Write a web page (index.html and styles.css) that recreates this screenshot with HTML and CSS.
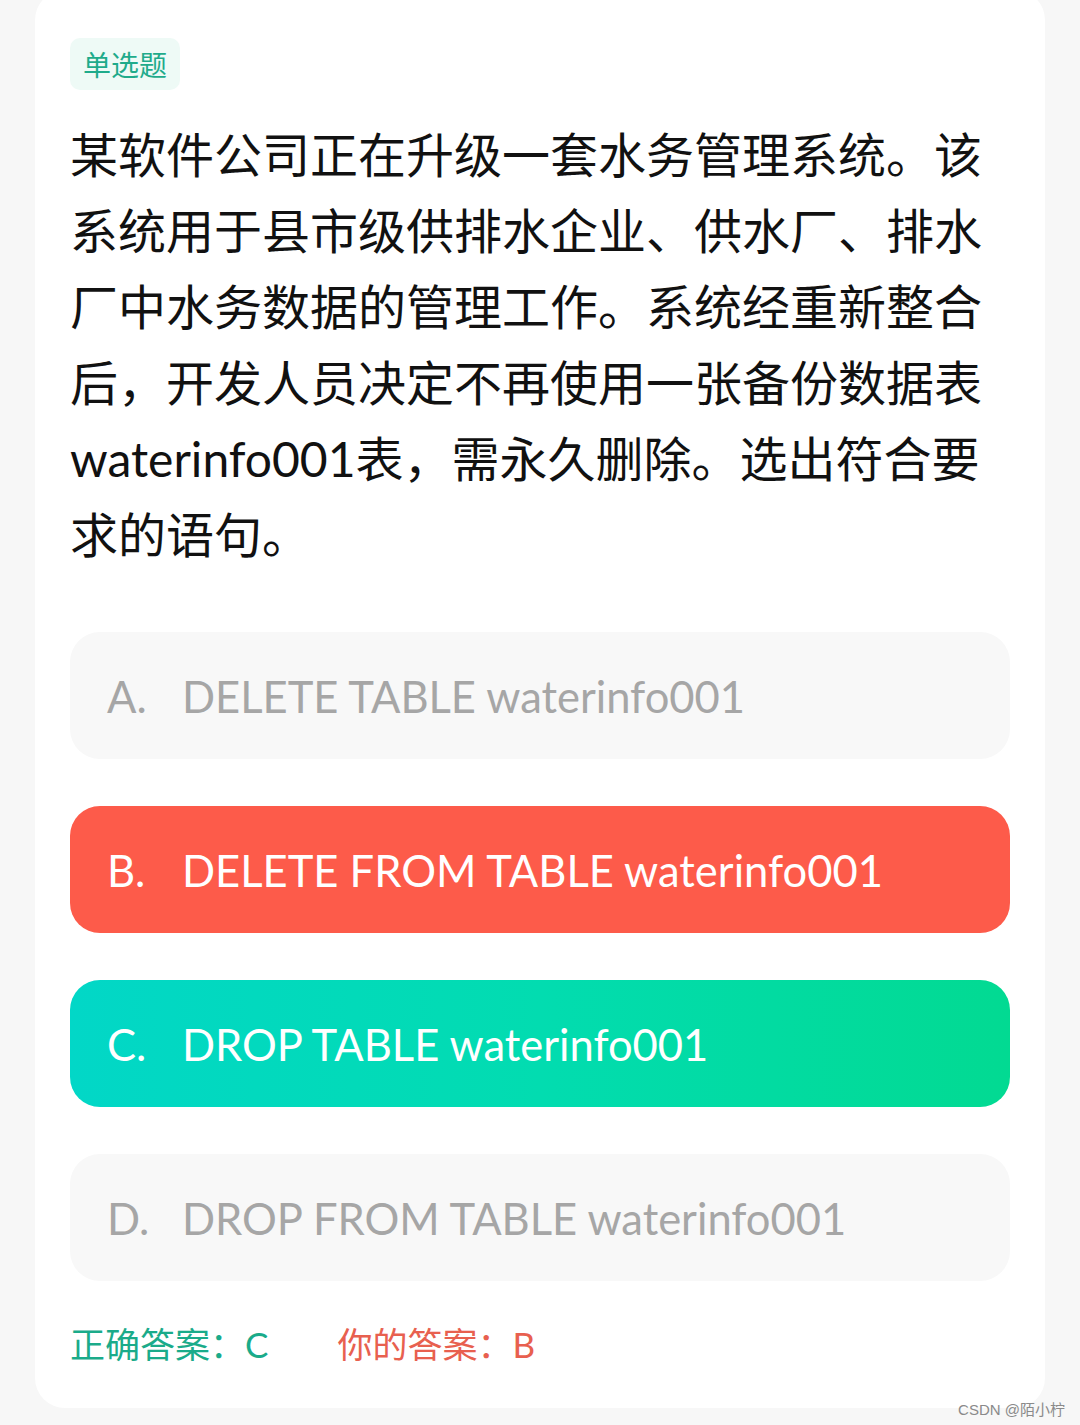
FILE: index.html
```html
<!DOCTYPE html>
<html lang="zh-CN">
<head>
<meta charset="utf-8">
<title>单选题</title>
<link rel="stylesheet" href="styles.css">
</head>
<body>
<main class="card">
  <span class="tag">单选题</span>
  <p class="question">某软件公司正在升级一套水务管理系统。该系统用于县市级供排水企业、供水厂、排水厂中水务数据的管理工作。系统经重新整合后，开发人员决定不再使用一张备份数据表waterinfo001表，需永久删除。选出符合要求的语句。</p>
  <ul class="options">
    <li class="option"><span class="letter">A.</span><span>DELETE TABLE waterinfo001</span></li>
    <li class="option wrong"><span class="letter">B.</span><span>DELETE FROM TABLE waterinfo001</span></li>
    <li class="option right"><span class="letter">C.</span><span>DROP TABLE waterinfo001</span></li>
    <li class="option"><span class="letter">D.</span><span>DROP FROM TABLE waterinfo001</span></li>
  </ul>
  <div class="answers">
    <span class="correct">正确答案：C</span>
    <span class="yours">你的答案：B</span>
  </div>
</main>
<div class="watermark">CSDN @陌小柠</div>
</body>
</html>
```

FILE: styles.css
```css
* { box-sizing: border-box; }

html, body {
  margin: 0;
  padding: 0;
}

body {
  background: #f7f7f7;
  height: 1425px;
  overflow: hidden;
  position: relative;
  font-family: "Lato", "Noto Sans CJK SC", sans-serif;
}

.card {
  margin: -10px 35px 0;
  width: 1010px;
  background: #ffffff;
  border-radius: 30px;
  padding: 48px 35px 44px;
  display: flex;
  flex-direction: column;
  align-items: flex-start;
}

.tag {
  display: inline-block;
  height: 52px;
  line-height: 52px;
  padding: 0 13px;
  font-size: 28px;
  color: #1fab8b;
  background: #eefaf6;
  border-radius: 10px;
  font-family: "Noto Sans CJK SC", sans-serif;
}

.question {
  margin: 27px 0 0;
  width: 940px;
  font-size: 48px;
  line-height: 76px;
  color: #111111;
  font-family: "Lato", "Noto Sans CJK SC", sans-serif;
}

.options {
  list-style: none;
  margin: 59px 0 0;
  padding: 0;
  width: 940px;
  display: flex;
  flex-direction: column;
  gap: 47px;
}

.option {
  height: 127px;
  border-radius: 30px;
  background: #f8f8f8;
  color: #a6a6a6;
  display: flex;
  align-items: center;
  padding-left: 37px;
  font-size: 43.5px;
  font-family: "Lato", sans-serif;
}

.letter {
  display: inline-block;
  width: 75px;
}

.option.wrong {
  background: #fd5b4a;
  color: #ffffff;
}

.option.right {
  background: linear-gradient(90deg, #02d7c7 0%, #02dcb0 50%, #02da92 100%);
  color: #ffffff;
}

.answers {
  margin-top: 43px;
  height: 40px;
  line-height: 40px;
  font-size: 35px;
  display: flex;
  gap: 69px;
  font-family: "Lato", "Noto Sans CJK SC", sans-serif;
}

.correct { color: #1aab8a; }
.yours { color: #e8604f; }

.watermark {
  position: absolute;
  right: 15px;
  top: 1398px;
  font-size: 15px;
  color: #8a8a8a;
  font-family: "Liberation Sans", "Noto Sans CJK SC", sans-serif;
}
```
